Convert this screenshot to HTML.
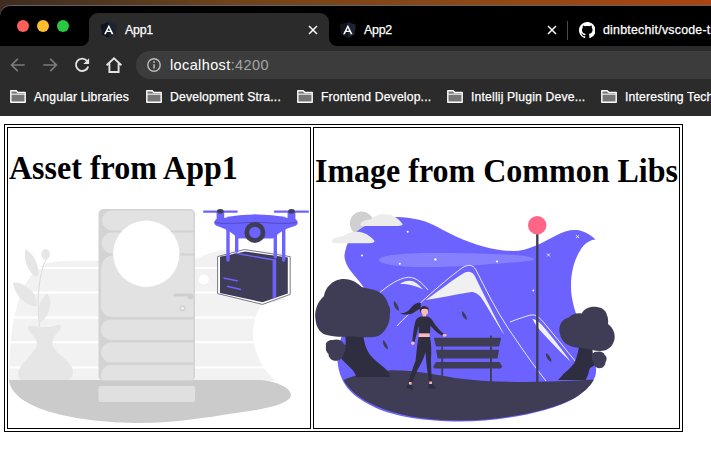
<!DOCTYPE html>
<html><head><meta charset="utf-8"><title>App1</title>
<style>
html,body{margin:0;padding:0;background:#fff;overflow:hidden}
body{width:711px;height:456px;position:relative;font-family:"Liberation Sans",sans-serif}
.abs{position:absolute}
#desk{left:0;top:0;width:711px;height:18px;background:linear-gradient(90deg,#3e2c1e 0,#52371e 15%,#70431a 33%,#8d4815 66%,#ab4410 100%)}
#win{left:0;top:6px;width:711px;height:109px;background:#000;border-top-left-radius:10px;box-shadow:0 -1px 0 #5f6268}
#toolbar{left:0;top:46px;width:711px;height:70px;background:#2b2b2b}
#tab{left:89px;top:13px;width:240px;height:34px;background:#2b2b2b;border-radius:9px 9px 0 0}
.tl{width:12px;height:12px;border-radius:50%;top:20px}
.tabtxt{color:#fff;font-size:12.4px;letter-spacing:-.25px;-webkit-text-stroke:.25px #fff;top:22.600px;line-height:14px;white-space:nowrap}
#pill{left:136px;top:51px;width:600px;height:28px;border-radius:14px;background:#3c3c3c}
#url{left:170px;top:56px;font-size:14.5px;letter-spacing:.38px;line-height:18px;color:#fff;white-space:nowrap}
#url span{color:#a5a5a5}
.bm{top:90px;color:#fff;font-size:12.2px;line-height:14px;white-space:nowrap;letter-spacing:.17px;-webkit-text-stroke:.25px #fff}
.h1{font-family:"Liberation Serif",serif;font-weight:bold;font-size:32px;line-height:37px;color:#000;white-space:nowrap;transform-origin:0 28.3px;transform:scaleY(1.06)}
.box{border:1px solid #000;box-sizing:border-box}
</style></head><body>
<div id="desk" class="abs"></div>
<div id="win" class="abs"></div>
<div id="toolbar" class="abs"></div>
<div id="tab" class="abs"></div>
<svg class="abs" style="left:81px;top:38px" width="8" height="8"><path d="M8 0V8H0A8 8 0 0 0 8 0Z" fill="#2b2b2b"/></svg>
<svg class="abs" style="left:329px;top:38px" width="8" height="8"><path d="M0 0V8H8A8 8 0 0 1 0 0Z" fill="#2b2b2b"/></svg>
<div class="abs tl" style="left:17px;background:#fe5f57"></div>
<div class="abs tl" style="left:37px;background:#febc2e"></div>
<div class="abs tl" style="left:57px;background:#28c840"></div>
<div class="abs tabtxt" style="left:125px">App1</div>
<div class="abs tabtxt" style="left:364px">App2</div>
<div class="abs tabtxt" style="left:603px;letter-spacing:.22px">dinbtechit/vscode-theme</div>
<div id="pill" class="abs"></div>
<!-- angular favicons -->
<svg class="abs" style="left:100.200px;top:21.800px" width="17.600" height="16.200" viewBox="0 0 16 16" preserveAspectRatio="none"><path d="M8 0L.6 2.7 1.8 12.4 8 16Z" fill="#10141f"/><path d="M8 0l7.4 2.7-1.2 9.7L8 16Z" fill="#1d2330"/><path d="M8 2.6L3.7 12.2h1.7l.9-2.2h3.4l.9 2.2h1.7ZM8 5.9l1.2 2.8H6.8Z" fill="#fff"/></svg>
<svg class="abs" style="left:339.200px;top:21.800px" width="17.600" height="16.200" viewBox="0 0 16 16" preserveAspectRatio="none"><path d="M8 0L.6 2.7 1.8 12.4 8 16Z" fill="#10141f"/><path d="M8 0l7.4 2.7-1.2 9.7L8 16Z" fill="#1d2330"/><path d="M8 2.6L3.7 12.2h1.7l.9-2.2h3.4l.9 2.2h1.7ZM8 5.9l1.2 2.8H6.8Z" fill="#fff"/></svg>
<!-- close x -->
<svg class="abs" style="left:308px;top:25px" width="10" height="10" viewBox="0 0 10 10"><path d="M1 1l8 8M9 1l-8 8" stroke="#fff" stroke-width="1.5" fill="none"/></svg>
<svg class="abs" style="left:547px;top:25px" width="10" height="10" viewBox="0 0 10 10"><path d="M1 1l8 8M9 1l-8 8" stroke="#fff" stroke-width="1.5" fill="none"/></svg>
<div class="abs" style="left:567px;top:21px;width:1px;height:19px;background:#4a4a4a"></div>
<!-- github -->
<svg class="abs" style="left:578.5px;top:21.5px" width="16.5" height="16.5" viewBox="0 0 16 16"><path fill="#fff" d="M8 0C3.58 0 0 3.58 0 8c0 3.54 2.29 6.53 5.47 7.59.4.07.55-.17.55-.38 0-.19-.01-.82-.01-1.49-2.01.37-2.53-.49-2.69-.94-.09-.23-.48-.94-.82-1.13-.28-.15-.68-.52-.01-.53.63-.01 1.08.58 1.23.82.72 1.21 1.87.87 2.33.66.07-.52.28-.87.51-1.07-1.78-.2-3.64-.89-3.64-3.95 0-.87.31-1.59.82-2.15-.08-.2-.36-1.02.08-2.12 0 0 .67-.21 2.2.82.64-.18 1.32-.27 2-.27s1.36.09 2 .27c1.53-1.04 2.2-.82 2.2-.82.44 1.1.16 1.92.08 2.12.51.56.82 1.27.82 2.15 0 3.07-1.87 3.75-3.65 3.95.29.25.54.73.54 1.48 0 1.07-.01 1.93-.01 2.2 0 .21.15.46.55.38A8.013 8.013 0 0016 8c0-4.42-3.58-8-8-8z"/></svg>
<!-- nav -->
<svg class="abs" style="left:10px;top:57px" width="16" height="16" viewBox="0 0 16 16"><path d="M14.7 8H1.6M7.8 1.8L1.6 8l6.2 6.2" stroke="#7b7b7b" stroke-width="1.7" fill="none"/></svg>
<svg class="abs" style="left:42px;top:57px" width="16" height="16" viewBox="0 0 16 16"><path d="M1.3 8h13.1M8.2 1.8L14.4 8l-6.2 6.2" stroke="#7b7b7b" stroke-width="1.7" fill="none"/></svg>
<svg class="abs" style="left:74px;top:56px" width="18" height="18" viewBox="0 0 18 18"><path d="M14.2 10.4A6.200 6.200 0 1 1 12.950 4.800" stroke="#e3e3e3" stroke-width="1.900" fill="none"/><path d="M15.100 2.300V8H9.300z" fill="#e3e3e3"/></svg>
<svg class="abs" style="left:105px;top:56px" width="18" height="18" viewBox="0 0 18 18"><path d="M1.6 9.2L9 2.4l7.4 6.8M4.4 7.5v8.5h9.2V7.5" stroke="#e3e3e3" stroke-width="1.9" fill="none" stroke-linejoin="miter"/></svg>
<!-- info -->
<svg class="abs" style="left:146px;top:57px" width="16" height="16" viewBox="0 0 16 16"><circle cx="8" cy="8" r="6.2" stroke="#bdbdbd" stroke-width="1.4" fill="none"/><path d="M8 7.2v4.2" stroke="#bdbdbd" stroke-width="1.5"/><circle cx="8" cy="5" r=".95" fill="#bdbdbd"/></svg>
<svg class="abs" style="left:9px;top:89px" width="18" height="15" viewBox="0 0 18 15"><path d="M1.8 1.8h5.4l1.6 1.7h7.4v9.7H1.8z" fill="#767676" stroke="#fff" stroke-width="1.400" stroke-linejoin="round"/><path d="M1.8 5.2h14.4" stroke="#f0f0f0" stroke-width="1.1"/></svg>
<svg class="abs" style="left:145px;top:89px" width="18" height="15" viewBox="0 0 18 15"><path d="M1.8 1.8h5.4l1.6 1.7h7.4v9.7H1.8z" fill="#767676" stroke="#fff" stroke-width="1.400" stroke-linejoin="round"/><path d="M1.8 5.2h14.4" stroke="#f0f0f0" stroke-width="1.1"/></svg>
<svg class="abs" style="left:296px;top:89px" width="18" height="15" viewBox="0 0 18 15"><path d="M1.8 1.8h5.4l1.6 1.7h7.4v9.7H1.8z" fill="#767676" stroke="#fff" stroke-width="1.400" stroke-linejoin="round"/><path d="M1.8 5.2h14.4" stroke="#f0f0f0" stroke-width="1.1"/></svg>
<svg class="abs" style="left:446px;top:89px" width="18" height="15" viewBox="0 0 18 15"><path d="M1.8 1.8h5.4l1.6 1.7h7.4v9.7H1.8z" fill="#767676" stroke="#fff" stroke-width="1.400" stroke-linejoin="round"/><path d="M1.8 5.2h14.4" stroke="#f0f0f0" stroke-width="1.1"/></svg>
<svg class="abs" style="left:600px;top:89px" width="18" height="15" viewBox="0 0 18 15"><path d="M1.8 1.8h5.4l1.6 1.7h7.4v9.7H1.8z" fill="#767676" stroke="#fff" stroke-width="1.400" stroke-linejoin="round"/><path d="M1.8 5.2h14.4" stroke="#f0f0f0" stroke-width="1.1"/></svg>

<div id="url" class="abs">localhost<span>:4200</span></div>
<div class="abs bm" style="left:34px">Angular Libraries</div>
<div class="abs bm" style="left:170px">Development Stra...</div>
<div class="abs bm" style="left:321px">Frontend Develop...</div>
<div class="abs bm" style="left:471px">Intellij Plugin Deve...</div>
<div class="abs bm" style="left:625px">Interesting Tech</div>

<div class="abs box" style="left:4px;top:124px;width:679px;height:308px"></div>
<div class="abs box" style="left:7px;top:127px;width:304px;height:302px"></div>
<div class="abs box" style="left:313px;top:127px;width:367px;height:302px"></div>

<svg id="art" class="abs" style="left:0;top:0" width="711" height="456" viewBox="0 0 711 456">
<!-- IMAGE 1 -->
<g id="img1">
<path d="M9 381C9.500 352 11 328 16 310C20 293 27 277 39 267C47 261.500 58 261 70 261C100 260 150 263 195 259C205 255 215 250 230 250L285 252L285 300L262 304C252 318 250 340 258 356C262 366 268 374 276 381Z" fill="#f2f2f2"/>
<g stroke="#fff" stroke-width="2"><path d="M30 268H260M14 292.6H262M10 317.4H256M8 342.2H256M8 367.5H266"/></g>
<circle cx="203.7" cy="279.5" r="5" fill="#fff"/>
<!-- ground -->
<path d="M9 380H262C278 382 291 388 291 395C291 404 262 410 236 413C205 418 170 423 140 423C80 423 12 410 9 380Z" fill="#cbcbcb"/>
<!-- plant -->
<path d="M39.500 327C36.500 300 38.500 275 46.500 258" stroke="#dcdcdc" stroke-width="1" fill="none"/>
<ellipse cx="45.600" cy="254.300" rx="4.300" ry="5.200" fill="#e6e6e6"/>
<path d="M25.400 249C32 253 38 261 38.500 272C38.500 274 37.500 275.500 36.500 277C29 273 23 262 25.400 249Z" fill="#e6e6e6"/>
<path d="M13 282.500C23 282 33 289 36.500 300C37 302.500 37 304.500 36.500 306.500C26 306 15 296 13 282.500Z" fill="#e6e6e6"/>
<path d="M47.500 293.500C52.500 301 51 315 40 323C36 312 39 299 47.500 293.500Z" fill="#e6e6e6"/>
<!-- vase -->
<path d="M28 329C27 326 30 325 34 326C44 328 52 327 58 325C62 324 62 328 60 330C55 335 51 340 53 346C57 356 74 362 73 372C73 377 70 380 66 380H24C19 380 17 375 19 370C24 360 36 352 37 344C37 338 31 334 28 329Z" fill="#e6e6e6"/>
<!-- door -->
<rect x="98.5" y="209" width="96.5" height="172" rx="5" fill="#d3d3d3"/>
<g fill="#e2e2e2">
<path d="M112 210.500H190Q193.500 210.500 193.500 214V230.500H112A10 10 0 0 1 112 210.500Z"/>
<path d="M112 232.500H193.500V253.500H112A10.500 10.500 0 0 1 112 232.500Z"/>
<path d="M114 255.500H193.500V317H112A11 11 0 0 1 101 306V268A12.500 12.500 0 0 1 114 255.500Z"/>
<path d="M111 319.500H193.500V340H111A10.200 10.200 0 0 1 111 319.500Z"/>
<path d="M111 342.500H193.500V362.500H111A10 10 0 0 1 111 342.500Z"/>
<path d="M111 365H193.500V380H101V375A10 10 0 0 1 111 365Z"/>
</g>
<circle cx="146.300" cy="253.700" r="33.200" fill="#fff"/>
<path d="M175 295H191" stroke="#cfcfcf" stroke-width="3.200" stroke-linecap="round"/><circle cx="190.500" cy="296.500" r="3" fill="#cfcfcf"/>
<circle cx="182.400" cy="308.200" r="2.400" fill="#ececec" stroke="#cfcfcf" stroke-width="1.200"/>
<rect x="98.500" y="386" width="96.500" height="16" rx="2" fill="#e0e0e0"/>
<!-- drone -->
<g>
<path d="M217.600 256.600L244.400 249.500L290.200 256.600L290.200 294.400L262.600 304.400L217.600 293.600Z" fill="#fff" stroke="#6b697d" stroke-width=".9" stroke-linejoin="round"/>
<path d="M220 256.800L245.200 251.400L287.800 257.600L287.800 293.600L262.600 302.300L220 292.900Z" fill="#3f3d56"/>
<path d="M272.600 260.200L276.200 259.600L276.200 297.500L272.600 298.800Z" fill="#6c63ff"/>
<path d="M272.600 260.400L233 253.600L236.500 252.800L276.200 259.600Z" fill="#6c63ff"/>
<path d="M223.600 277.900L237.800 281M227 286.200L241 289.400" stroke="#6c63ff" stroke-width="1.500"/>
<g stroke="#6c63ff" stroke-width="3.400" stroke-linecap="round"><path d="M228 227V260M236.700 230V251M275.300 230V257M283.700 227V260"/></g>
<path d="M203.200 211.600H237.600M274 211.600H308.800" stroke="#6c63ff" stroke-width="2.400"/>
<path d="M216.600 211.600H224.200V219L255.400 214.600L287.600 219V211.600H295.400V219C298.500 221 298.500 224.500 295 226C288 228 280 231 273 238.500H238C231 231 223 228 217 226C213.500 224.500 213.500 221 216.600 219Z" fill="#6c63ff"/>
<path d="M224 218C234 215.600 245 214.600 255.400 214.600C266 214.600 278 215.600 288 218L288 221H224Z" fill="#6c63ff"/>
<path d="M214.500 222.600C228 224.600 242 222.400 255.400 222.400C269 222.400 283 224.600 297 222.600" stroke="#4f49b8" stroke-width=".9" fill="none"/>
<ellipse cx="220.300" cy="211.300" rx="3.300" ry="2.300" fill="#3f3d56"/><ellipse cx="291.500" cy="211.300" rx="3.300" ry="2.300" fill="#3f3d56"/>
<circle cx="254.900" cy="232.400" r="8.100" fill="#6c63ff" stroke="#3f3d56" stroke-width="4.800"/>
</g>
</g>
</g>
<!-- IMAGE 2 -->
<g id="img2">
<circle cx="361.700" cy="223.400" r="11.800" fill="#d0d0d0"/>
<path d="M347 245C350 236 360 226 380 219.500C392 216 404 216.500 420 220C432 223 444 231 456 236.500C475 245 495 251 513 251C528 251 542 243 556 235.500C564 231 572 229 580 230.500C586 232 591 235 595.500 239.500C590 240 585 243 581 249C574 260 571 272 571 286C571 300 575 312 581 326C587 340 594 355 596 368C596.500 374 595 378 593 380C584 396 566 404 545 410C520 417 490 421.500 460 421.500C425 421.500 395 416.500 375 407.500C359 400 347 391 342 379C335 364 336 345 345 330C352 318 368 300 365 290C362 283 352 274 348 267C345.500 262 344.200 258 344.500 255C345 251 346 248 347 245Z" fill="#6c63ff"/>
<!-- band cloud -->
<path d="M379 259C386 254 410 252.500 440 253C470 253 500 254 520 255.500C530 256.500 535 258 534 260C525 262 505 263 490 264C465 266.500 430 268 405 266.500C390 265.500 377 263 379 259Z" fill="#8680ff"/>
<!-- clouds -->
<path d="M360.500 224C362 221 366 219.500 371 219.500C374 215.500 381 213.500 388 214.500C394 215.500 399 219 402.500 224C403 225.500 400 226 396 226H364C361 226 360 225 360.500 224Z" fill="#ececec"/>
<path d="M332 241C333.500 238 338 236.500 343 236.500C347 232.500 354 231 360 232C366 233 371 236.500 374.500 241C375 242.500 372 243.200 368 243.200H336C333 243.200 331.500 242.500 332 241Z" fill="#ececec"/>
<!-- stars -->
<g fill="#fff"><circle cx="407.700" cy="231.800" r="1"/><circle cx="362" cy="255.500" r="1"/><circle cx="399.800" cy="263.700" r="1"/><circle cx="435.400" cy="259.500" r="1.200"/><circle cx="497" cy="261.600" r="1"/><circle cx="533.300" cy="290.500" r=".9"/></g>
<path d="M576 235.100l3 3m0-3l-3 3M547 253.500l3 3m0-3l-3 3" stroke="#fff" stroke-width=".8"/>
<!-- mountains -->
<g fill="none" stroke="#f4f4ff" stroke-width=".9">
<path d="M378 294C388 286 398 278 408.500 277.300C416 277 422 283 428 290"/>
<path d="M397 326C410 312 440 284 462 268C468 264 473 264.500 476 270C486 290 496 310 508 328C520 346 534 366 546 381"/>
<path d="M510 322C518 319 526 316 531 315C536 314 540 318 545 324C555 336 566 350 576 362"/>
</g>
<path d="M400 284C404 281 409 280 413 281.300C417 283 420 286 423 289.500C417 286 409 284 400 284Z" fill="#f0f0f0"/>
<path d="M425.700 300C440 290 455 278 464 273C468 271 472 271.500 474.500 275.500C482 291 493 313 504.600 335.400C498 326 490 311 481.300 297.800C478 293.500 474 292 471.300 292C455 294.500 440 298 425.700 300Z" fill="#f0f0f0"/>
<path d="M532.500 319C537 319.500 541 323.500 545 328.500C553 338 563 351 571 362C560 352 548 339 539 329C536 325.500 534 322 532.500 319Z" fill="#f0f0f0"/>
<!-- leaves -->
<g fill="#3f3d56">
<path d="M394 301C397 303 399 307 399 311C395 309 393 305 394 301Z"/>
<path d="M462 311C465 313 467 316.500 467 320C463.500 318.500 461.500 315 462 311Z"/>
<path d="M383 340C386 342 388 346 388 349.500C384.500 348 382.500 344 383 340Z"/>
<path d="M464 307C467 309 469 312.500 469 316C465.500 314.500 463.500 311 464 307Z" opacity="0"/>
<path d="M546 353C549 355 551.500 358.500 551.500 362C548 360.500 545.500 357 546 353Z"/>
</g>
<!-- lamp -->
<path d="M537.300 232V382" stroke="#3f3d56" stroke-width="2.400"/>
<circle cx="537.200" cy="225.300" r="9.200" fill="#ff6584"/>
<!-- ground -->
<path d="M343.500 380C352 376 368 371.500 388 370.500C410 369.500 432 374 455 378C485 382 520 382.500 550 381.500C570 381 585 380 594 379.500C586 394 568 403 546 409C520 416 490 420.500 460 420.500C425 420.500 396 415 376 406C360 399 349 390 343.500 380Z" fill="#3f3d56"/>
<!-- left tree -->
<path d="M344.600 334H363C364 342 366 349 369.600 354.200C374 360 380 364 384 367.400C387 370 389.500 373 390.600 377H356.400C355.500 374 354 372 352.500 370C349 366 345 363 342 359.500L339 352L345.500 345C346 341 345.500 337 344.600 334Z" fill="#2f2e41"/>
<path d="M315.600 320C314 312 317 302 324 296C325 288 332 280.500 340.600 279.200C348 278 356 281 361.700 287C365 288 369 288.500 373.500 289.700C381 291 387 298 388.500 305C390.500 308 390.500 312 389.800 314.700C390 324 385 332 378.800 335.800C370 339 360 336 350 336.500C342 337 333 337 324.800 334.500C319 332 316 326 315.600 320Z" fill="#3f3d56"/>
<path d="M326 346C325 342 329 339.500 333 340C337 338.500 342 340 343.500 343.500C346.500 345 346.500 350 344 352.500C344 357 340 361 336 360.800C332 361 328.500 358 328.500 354C326 352 325.500 349 326 346Z" fill="#3f3d56"/>
<!-- right tree -->
<path d="M579 346H592.400C592.500 352 593 357 593.700 360.800L597 364L590 368C589 371 588.400 373 588.400 374C587.500 376 586.500 378 585.800 380H558C560 378 562 376 563.400 374C568 370 573 366 575.300 360.800C577 356 578.500 351 579 346Z" fill="#2f2e41"/>
<path d="M559.500 331.800C558.500 325 562 319 568.700 317.400C572 314 577 312.500 581.800 313.400C584 309 589 306.500 595 306.800C601 307 606 310 606.800 314.700C608 317 608.500 321 608 324C612 327 615 332 614.700 337C614.500 343 611 348 605.500 350.300C598 352.500 590 349 582 348C576 348 570 346.500 566 343.700C562 341 560 336 559.500 331.800Z" fill="#3f3d56"/>
<path d="M592 356C591.500 353 594.500 351.300 597.500 351.800C600.500 351 604 352.500 604.800 355C607 356.500 607.300 360 605.500 362C605.500 365.500 602.500 368.500 599.500 368.200C596.500 368.500 594 366 594 363C592 361.500 591.500 358.500 592 356Z" fill="#3f3d56"/>
<!-- bench -->
<g fill="#3f3d56">
<path d="M434 338.500C434 338 434.500 337.800 435 337.800H499.500C500.500 337.800 501 338.200 501 339L499 346.500H436Z"/>
<path d="M436 349.800H499L497.500 358.600H437.500Z"/>
<path d="M436 361.900H499.500L502 366C502 367.500 501 368.500 500 368.500H435C434 368.500 433 367.500 433.500 366Z"/>
<rect x="441.300" y="346" width="1.800" height="31"/>
<rect x="490" y="335.600" width="1.900" height="47"/>
</g>
<!-- girl -->
<g>
<path d="M421 303C417 302 413 305 410 309C407 312.500 403 313.500 400 313C404 315.500 410 315 414 312.500C417 310.500 419 309 420.500 309Z" fill="#2f2e41"/>
<circle cx="424.200" cy="310.300" r="4.300" fill="#2f2e41"/>
<circle cx="424.600" cy="311.600" r="3.500" fill="#ffb8b8"/>
<path d="M420 309.500C421 306 428 305.500 429.200 309.500C427 308.500 423 308.500 420 309.500Z" fill="#2f2e41"/>
<rect x="422.800" y="314" width="3.200" height="3.500" fill="#ffb8b8"/>
<path d="M419 333.300H429.600V337H418.600Z" fill="#ffb8b8"/>
<path d="M421 316.500H427.500C430 317.500 432 319 433 321.500C436 326 440 331 444 334L442.500 336C437 333 433 329 430.500 325.500L430 333.300H419L418.500 326C417.500 331 416 337 414.500 342L412.300 341.500C413 334 414 326 415.500 321C416.500 318.500 418.500 317 421 316.500Z" fill="#2f2e41"/>
<circle cx="412.800" cy="343.300" r="1.700" fill="#ffb8b8"/>
<ellipse cx="444.600" cy="335.300" rx="2.100" ry="1.400" fill="#ffb8b8"/>
<path d="M418.600 337H430C431.500 345 431.500 352 431 358C431 366 431.500 374 432 381.500L428.800 382C427.500 372 426 362 425.500 352C424 358 421 364 418 369C415.500 374 413.500 379 411.800 383.500L408.800 382C410.500 375 413 367 415.500 361C416.500 353 417 345 418.600 337Z" fill="#2f2e41"/>
<rect x="409" y="382" width="2.600" height="2.600" fill="#ffb8b8"/><rect x="429.300" y="381.500" width="2.600" height="2.600" fill="#ffb8b8"/>
<path d="M408.500 384.500L412 385.500C413 387 413.500 388.500 413 390L406.500 387.500C406.500 386 407.500 385 408.500 384.500Z" fill="#2f2e41"/>
<path d="M428.800 384H432.300C434 385.500 435.500 386.500 436 388.500H428.500C428 387 428.300 385.500 428.800 384Z" fill="#2f2e41"/>
</g>
</g>
</svg>
<div class="abs h1" style="left:9px;top:150.3px">Asset from App1</div>
<div class="abs h1" style="left:315px;top:153px">Image from Common Libs</div>
</body></html>
